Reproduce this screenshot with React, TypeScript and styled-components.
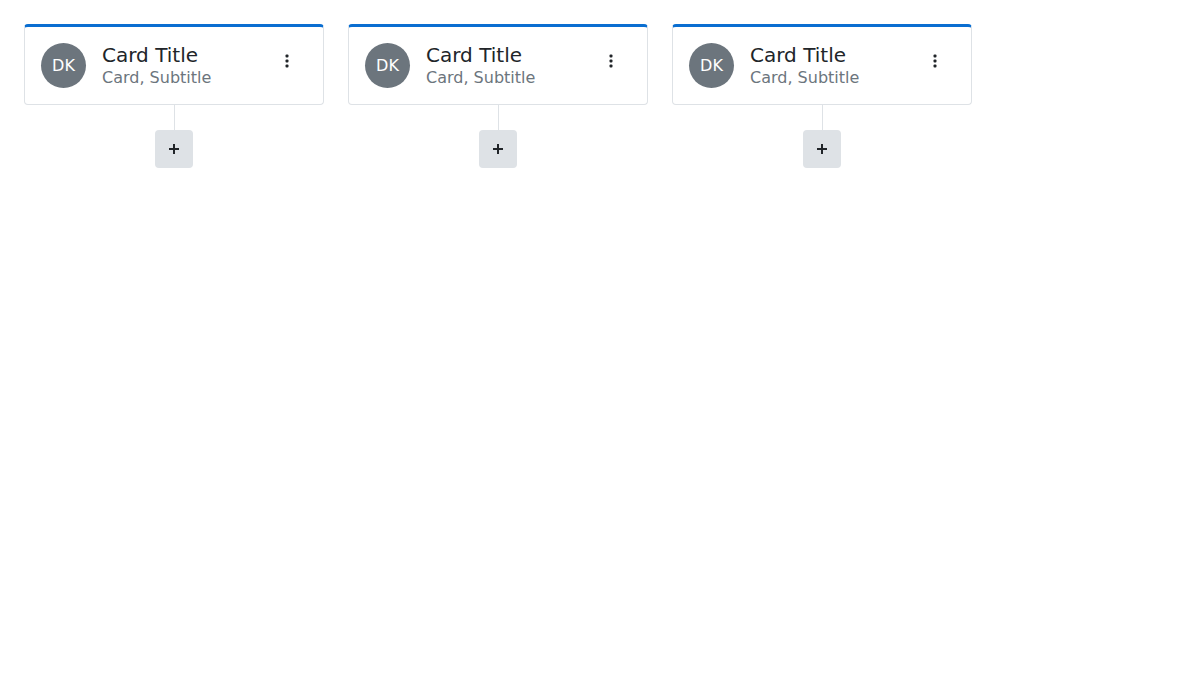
import styled, { createGlobalStyle } from "styled-components";

const GlobalStyle = createGlobalStyle`
  html, body {
    margin: 0;
    padding: 0;
    background: #fff;
    font-family: "DejaVu Sans", sans-serif;
    color: #212529;
  }
`;

const Board = styled.div`
  display: flex;
  align-items: flex-start;
  gap: 24px;
  padding: 24px;
`;

const Column = styled.div`
  width: 300px;
  display: flex;
  flex-direction: column;
  align-items: center;
`;

const Card = styled.div`
  box-sizing: border-box;
  width: 100%;
  display: flex;
  align-items: center;
  gap: 16px;
  padding: 16px;
  background: #fff;
  border: 1px solid #dee2e6;
  border-top: 3px solid #0a6ed1;
  border-radius: 4px;
`;

const Avatar = styled.div`
  flex: none;
  width: 45px;
  height: 45px;
  border-radius: 50%;
  background: #6c757d;
  color: #fff;
  display: flex;
  align-items: center;
  justify-content: center;
  font-size: 16px;
`;

const Text = styled.div`
  flex: 1;
  display: flex;
  flex-direction: column;
`;

const Title = styled.div`
  font-size: 20px;
  line-height: 24px;
  color: #212529;
`;

const Subtitle = styled.div`
  font-size: 16px;
  line-height: 21px;
  color: #6c757d;
`;

const MenuButton = styled.button`
  flex: none;
  align-self: flex-start;
  width: 24px;
  height: 36px;
  margin-right: 8px;
  padding: 0;
  border: 0;
  background: transparent;
  display: flex;
  align-items: center;
  justify-content: center;
  color: #212529;
`;

const Connector = styled.div`
  width: 1px;
  height: 25px;
  background: #dee2e6;
`;

const AddButton = styled.button`
  width: 38px;
  height: 38px;
  padding: 0;
  border: 0;
  border-radius: 4px;
  background: #dee2e6;
  color: #212529;
  display: flex;
  align-items: center;
  justify-content: center;
`;

const Dots = () => (
  <svg width="4" height="14" viewBox="0 0 4 14" fill="currentColor">
    <rect x="0.5" y="0.5" width="3" height="3" rx="1" />
    <rect x="0.5" y="5.5" width="3" height="3" rx="1" />
    <rect x="0.5" y="10.5" width="3" height="3" rx="1" />
  </svg>
);

const Plus = () => (
  <svg width="12" height="12" viewBox="0 0 12 12" fill="currentColor">
    <rect x="5" y="1" width="2" height="10" />
    <rect x="1" y="5" width="10" height="2" />
  </svg>
);

const cards = [1, 2, 3];

export default function App() {
  return (
    <>
      <GlobalStyle />
      <Board>
        {cards.map((c) => (
          <Column key={c}>
            <Card>
              <Avatar>DK</Avatar>
              <Text>
                <Title>Card Title</Title>
                <Subtitle>Card, Subtitle</Subtitle>
              </Text>
              <MenuButton>
                <Dots />
              </MenuButton>
            </Card>
            <Connector />
            <AddButton>
              <Plus />
            </AddButton>
          </Column>
        ))}
      </Board>
    </>
  );
}
